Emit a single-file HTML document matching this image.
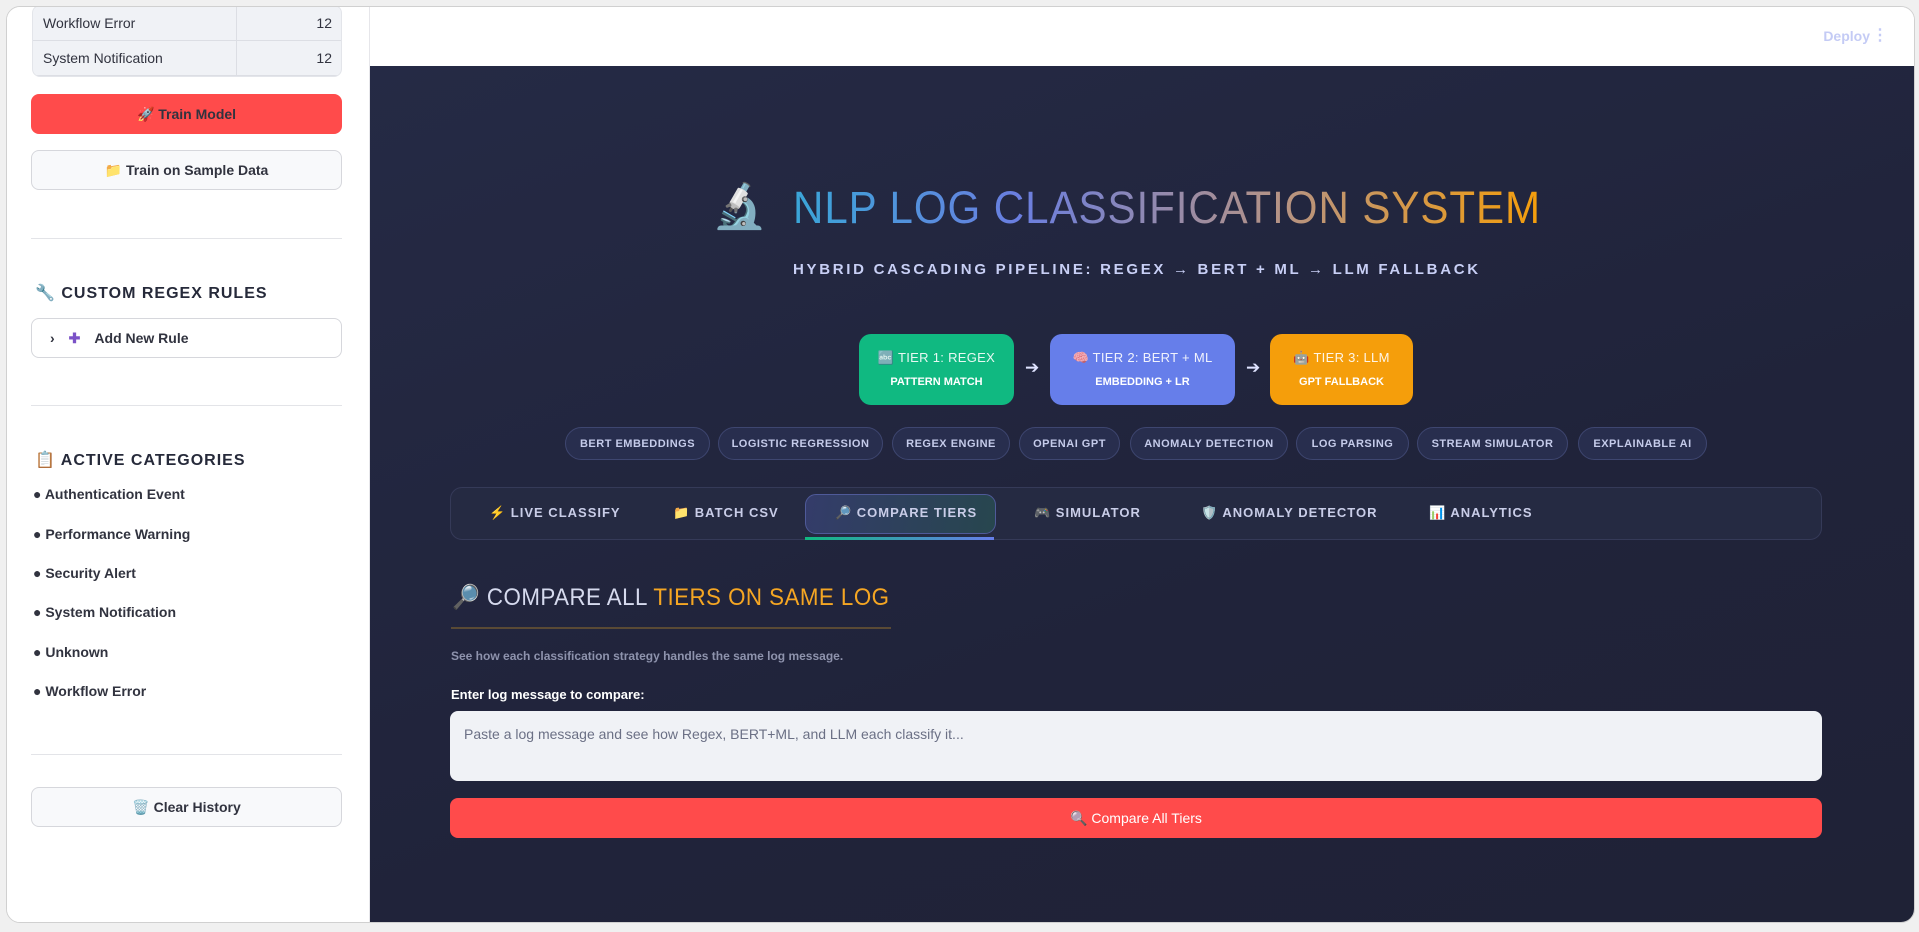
<!DOCTYPE html>
<html><head><meta charset="utf-8"><style>
*{box-sizing:border-box;margin:0;padding:0}
body{width:1919px;height:932px;background:#f0f0f0;font-family:"Liberation Sans",sans-serif;position:relative;overflow:hidden}
.frame{position:absolute;left:6px;top:6px;width:1909px;height:917px;border:1px solid #d0d0d0;border-radius:14px;overflow:hidden;background:#fff}
.side{position:absolute;left:0;top:0;width:363px;height:100%;background:#fff;border-right:1px solid #e6e6ea}
.main{position:absolute;left:363px;top:0;right:0;bottom:0;background:#fff}
.dark{position:absolute;left:0;top:59px;right:0;bottom:0;background:linear-gradient(160deg,#252a45,#20233a 60%,#1f2236)}
.abs{position:absolute}
.tbl{left:25px;top:-2px;width:310px;height:72px;background:#f0f2f6;border:1px solid #e3e5ea;border-radius:8px;overflow:hidden}
.tbl .r{position:absolute;left:0;right:0;height:35px;border-bottom:1px solid #dcdee4;font-size:14px;color:#31333f}
.btn{position:absolute;left:24px;width:311px;height:40px;border-radius:8px;font-size:14px;font-weight:bold;color:#31333f;display:flex;align-items:center;justify-content:center;gap:8px}
.sec{font-weight:bold;font-size:16px;letter-spacing:1px;color:#262a3a}
.hr{position:absolute;left:24px;width:311px;height:1px;background:#e3e4e8}
.li{position:absolute;left:26px;font-size:14px;font-weight:bold;color:#31333f}
.chip{position:absolute;top:427px;height:33px;border:1px solid #3e4670;background:#282e4e;border-radius:17px;color:#c5cbea;font-size:11px;font-weight:bold;letter-spacing:.5px;display:flex;align-items:center;justify-content:center;white-space:nowrap}
.tier{position:absolute;top:334px;height:71px;border-radius:12px;color:#fff;text-align:center}
.tier .a{margin-top:16px;font-size:13px;letter-spacing:.3px;opacity:.9}
.tier .b{margin-top:10px;font-size:11px;font-weight:bold}
.tab{position:absolute;font-size:13px;font-weight:bold;letter-spacing:1px;color:#c9cde8}
</style></head><body>
<div class="frame">
 <div class="side">
  <div class="abs tbl">
   <div class="r" style="top:0"><span class="abs" style="left:10px;top:9px">Workflow Error</span><span class="abs" style="right:9px;top:9px">12</span></div>
   <div class="r" style="top:35px"><span class="abs" style="left:10px;top:9px">System Notification</span><span class="abs" style="right:9px;top:9px">12</span></div>
   <div class="abs" style="left:203px;top:0;width:1px;height:72px;background:#dcdee4"></div>
  </div>
  <div class="btn" style="top:87px;background:#ff4b4b">🚀 Train Model</div>
  <div class="btn" style="top:143px;background:#f8f9fb;border:1px solid #d6d7dc">📁 Train on Sample Data</div>
  <div class="hr" style="top:231px"></div>
  <div class="abs sec" style="left:28px;top:276px">🔧 CUSTOM REGEX RULES</div>
  <div class="btn" style="top:311px;background:#fff;border:1px solid #d6d7dc;justify-content:flex-start;padding-left:18px;gap:14px"><span>›</span><span style="color:#7b52c7">✚</span> Add New Rule</div>
  <div class="hr" style="top:398px"></div>
  <div class="abs sec" style="left:28px;top:443px">📋 ACTIVE CATEGORIES</div>
  <div class="li" style="top:479px">● Authentication Event</div>
  <div class="li" style="top:519px">● Performance Warning</div>
  <div class="li" style="top:558px">● Security Alert</div>
  <div class="li" style="top:597px">● System Notification</div>
  <div class="li" style="top:637px">● Unknown</div>
  <div class="li" style="top:676px">● Workflow Error</div>
  <div class="hr" style="top:747px"></div>
  <div class="btn" style="top:780px;background:#f8f9fb;border:1px solid #d6d7dc">🗑️ Clear History</div>
 </div>
 <div class="main">
  <div class="abs" style="right:44px;top:21px;font-size:14px;font-weight:bold;color:#c4cbf5">Deploy</div>
  <div class="abs" style="right:26px;top:18px;font-size:16px;color:#c4cbf5;font-weight:bold">⋮</div>
  <div class="dark"></div>
 </div>
</div>
<div class="abs" style="left:712px;top:180px;font-size:44px;color:#38b2d0">🔬</div>
<div class="abs" style="left:793px;top:182px;font-size:45px;letter-spacing:1px;transform:scaleX(0.935);transform-origin:left top;background:linear-gradient(90deg,#3aa6d8,#6a7ee0 30%,#b59385 65%,#f59e0b);-webkit-background-clip:text;background-clip:text;color:transparent;white-space:nowrap">NLP LOG CLASSIFICATION SYSTEM</div>
<div class="abs" style="left:793px;top:261px;font-weight:bold;font-size:15px;letter-spacing:2.7px;color:#c8cff5;white-space:nowrap">HYBRID CASCADING PIPELINE: REGEX → BERT + ML → LLM FALLBACK</div>
<div class="tier" style="left:859px;width:155px;background:#10b981"><div class="a">🔤 TIER 1: REGEX</div><div class="b">PATTERN MATCH</div></div>
<div class="abs" style="left:1025px;top:358px;color:#dfe3ff;font-size:17px">➔</div>
<div class="tier" style="left:1050px;width:185px;background:#667eea"><div class="a">🧠 TIER 2: BERT + ML</div><div class="b">EMBEDDING + LR</div></div>
<div class="abs" style="left:1246px;top:358px;color:#dfe3ff;font-size:17px">➔</div>
<div class="tier" style="left:1270px;width:143px;background:#f59e0b"><div class="a">🤖 TIER 3: LLM</div><div class="b">GPT FALLBACK</div></div>
<div class="chip" style="left:565px;width:145px">BERT EMBEDDINGS</div>
<div class="chip" style="left:718px;width:165px">LOGISTIC REGRESSION</div>
<div class="chip" style="left:892px;width:118px">REGEX ENGINE</div>
<div class="chip" style="left:1019px;width:101px">OPENAI GPT</div>
<div class="chip" style="left:1130px;width:158px">ANOMALY DETECTION</div>
<div class="chip" style="left:1296px;width:113px">LOG PARSING</div>
<div class="chip" style="left:1417px;width:151px">STREAM SIMULATOR</div>
<div class="chip" style="left:1578px;width:129px">EXPLAINABLE AI</div>
<div class="abs" style="left:450px;top:487px;width:1372px;height:53px;border:1px solid #353a58;border-radius:12px;background:#252a42"></div>
<div class="abs" style="left:805px;top:494px;width:191px;height:40px;border:1px solid #4f5a99;border-radius:11px;background:linear-gradient(100deg,#343c6a,#27464e)"></div>
<div class="abs" style="left:805px;top:537px;width:189px;height:3px;background:linear-gradient(90deg,#10b981,#667eea)"></div>
<div class="tab" style="left:489px;top:505px">⚡ LIVE CLASSIFY</div>
<div class="tab" style="left:673px;top:505px">📁 BATCH CSV</div>
<div class="tab" style="left:835px;top:505px">🔎 COMPARE TIERS</div>
<div class="tab" style="left:1034px;top:505px">🎮 SIMULATOR</div>
<div class="tab" style="left:1201px;top:505px">🛡️ ANOMALY DETECTOR</div>
<div class="tab" style="left:1429px;top:505px">📊 ANALYTICS</div>
<div class="abs" style="left:452px;top:583px;font-size:24px;letter-spacing:.5px;transform:scaleX(0.93);transform-origin:left top;color:#d6daee;white-space:nowrap">🔎 COMPARE ALL <span style="color:#f5a623">TIERS ON SAME LOG</span></div>
<div class="abs" style="left:451px;top:627px;width:440px;height:2px;background:#5a4a35"></div>
<div class="abs" style="left:451px;top:649px;font-size:12px;font-weight:bold;color:#8e93ad">See how each classification strategy handles the same log message.</div>
<div class="abs" style="left:451px;top:687px;font-size:13px;font-weight:bold;color:#fff">Enter log message to compare:</div>
<div class="abs" style="left:450px;top:711px;width:1372px;height:70px;border-radius:8px;background:#f0f2f6;font-size:14px;color:#6b7085;padding:15px 14px">Paste a log message and see how Regex, BERT+ML, and LLM each classify it...</div>
<div class="abs" style="left:450px;top:798px;width:1372px;height:40px;border-radius:8px;background:#ff4b4b;color:#fff;font-size:14px;display:flex;align-items:center;justify-content:center">🔍&nbsp;Compare All Tiers</div>
</body></html>
